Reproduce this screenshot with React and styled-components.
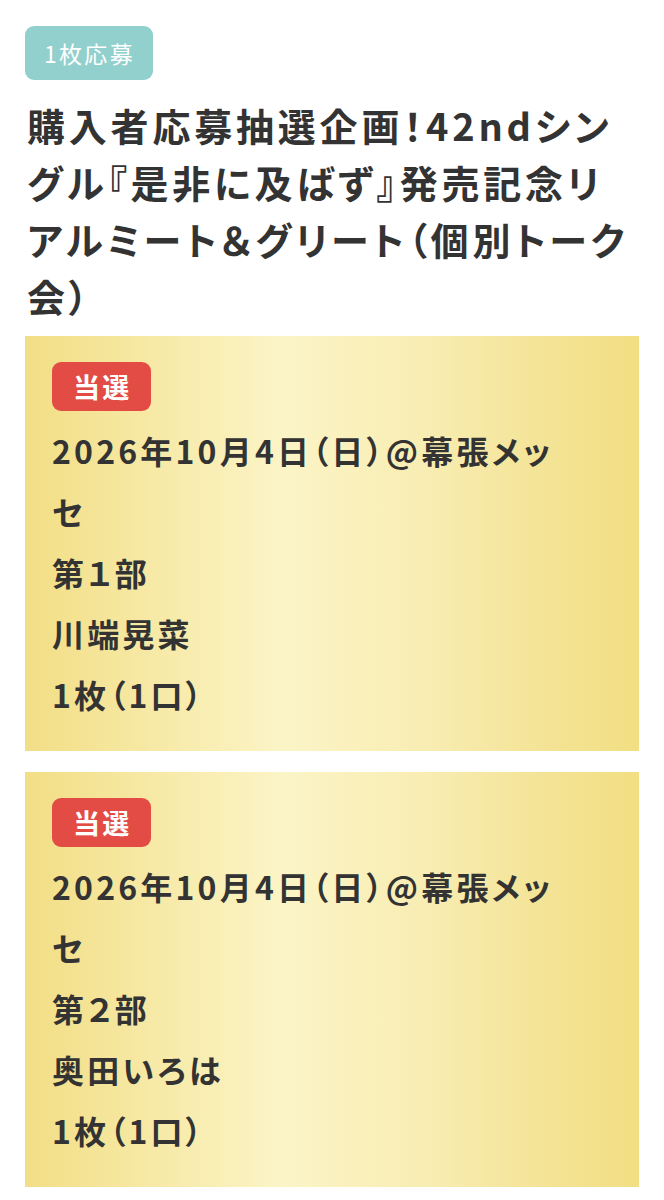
import React from "react";
import styled, { createGlobalStyle } from "styled-components";

const GlobalStyle = createGlobalStyle`
  html, body {
    margin: 0;
    padding: 0;
    background: #ffffff;
  }
  body {
    font-family: "Noto Sans CJK JP", "Noto Sans", sans-serif;
    color: #333333;
    font-feature-settings: "palt";
  }
`;

const entries = [
  {
    id: 1,
    date: "2026年10月4日（日）@幕張メッセ",
    part: "第１部",
    member: "川端晃菜",
    count: "1枚（1口）",
  },
  {
    id: 2,
    date: "2026年10月4日（日）@幕張メッセ",
    part: "第２部",
    member: "奥田いろは",
    count: "1枚（1口）",
  },
];

const App = () => {
  return (
    <Page>
      <GlobalStyle />
      <TypeTag>1枚応募</TypeTag>
      <Title>
        購入者応募抽選企画！42ndシングル『是非に及ばず』発売記念リアルミート＆グリート（個別トーク会）
      </Title>
      <CardList>
        {entries.map((entry) => (
          <ResultCard key={entry.id}>
            <WinBadge>当選</WinBadge>
            <DetailLine>{entry.date}</DetailLine>
            <DetailLine>{entry.part}</DetailLine>
            <DetailLine>{entry.member}</DetailLine>
            <DetailLine>{entry.count}</DetailLine>
          </ResultCard>
        ))}
      </CardList>
    </Page>
  );
};

export default App;

const Page = styled.div`
  padding: 26px 25px 12px;
  display: flex;
  flex-direction: column;
  align-items: flex-start;
`;

const TypeTag = styled.span`
  display: inline-flex;
  align-items: center;
  height: 54px;
  padding: 0 18px 0 19px;
  border-radius: 9px;
  background: #92d0cd;
  color: #ffffff;
  font-size: 23px;
  font-weight: 400;
  letter-spacing: 0.1em;
`;

const Title = styled.h1`
  margin: 16px 0 12px;
  padding-left: 2px;
  font-size: 38px;
  font-weight: 700;
  line-height: 57px;
  letter-spacing: 0.1em;
  color: #333333;
`;

const CardList = styled.div`
  align-self: stretch;
  display: flex;
  flex-direction: column;
  gap: 21px;
`;

const ResultCard = styled.section`
  display: flex;
  flex-direction: column;
  align-items: flex-start;
  padding: 26px 60px 26px 27px;
  background: linear-gradient(
    90deg,
    #f2de85 0%,
    #f7eaa8 22%,
    #fbf4c6 42%,
    #f8edb3 65%,
    #f3e291 88%,
    #f2df83 100%
  );
`;

const WinBadge = styled.span`
  display: inline-flex;
  align-items: center;
  height: 49px;
  padding: 0 20px 0 21px;
  margin-bottom: 9px;
  border-radius: 9px;
  background: #e34c45;
  color: #ffffff;
  font-size: 27px;
  font-weight: 700;
  letter-spacing: 0.08em;
`;

const DetailLine = styled.p`
  margin: 0;
  font-size: 32px;
  font-weight: 700;
  line-height: 61px;
  letter-spacing: 0.1em;
  color: #333333;
`;
